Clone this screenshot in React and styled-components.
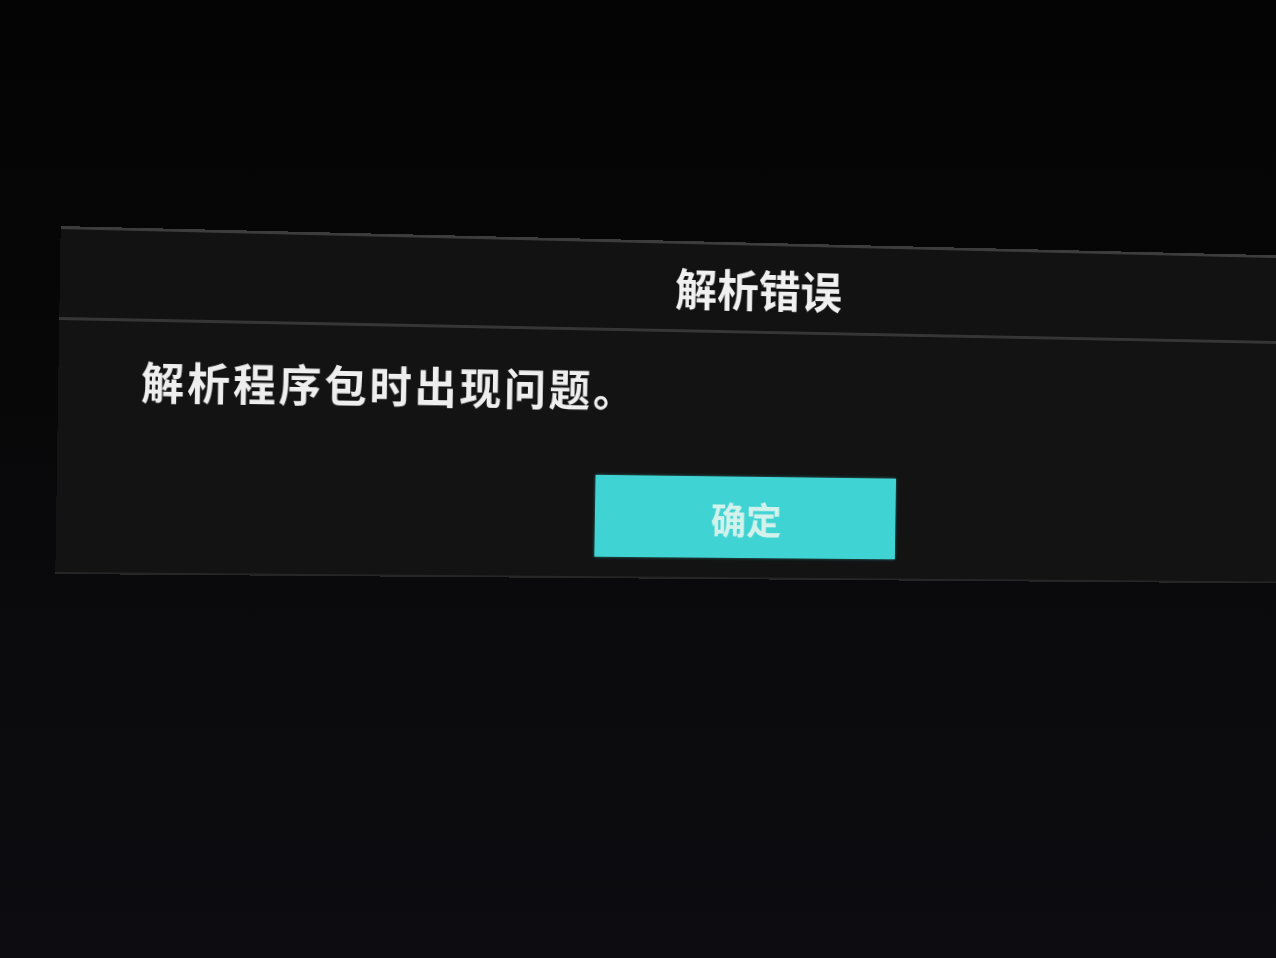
import * as React from "react"
import styled, { createGlobalStyle } from "styled-components"

const GlobalStyle = createGlobalStyle`
  html, body {
    margin: 0;
    padding: 0;
    background: #040404;
    overflow: hidden;
  }
  body {
    font-family: "Noto Sans CJK SC", "Noto Sans", sans-serif;
  }
`

// **** Styled Components ****
const Screen = styled.div`
  width: 1276px;
  height: 958px;
  overflow: hidden;
  background: linear-gradient(
    180deg,
    #040404 0%,
    #060606 30%,
    #0b0b0e 70%,
    #0d0d11 100%
  );
  padding-top: 226px;
  box-sizing: border-box;
`

// the photo is taken at a slight angle, so the panel gets a little perspective
const Dialog = styled.div`
  width: 1460px;
  margin-left: 58px;
  background: #111111;
  transform: perspective(3000px) rotateY(8deg) rotate(0.9deg);
  transform-origin: 0 50%;
  border-bottom: 2px solid #262626;
`

const Header = styled.div`
  height: 88px;
  display: flex;
  align-items: center;
  justify-content: center;
  border-top: 3px solid #3c3c3c;
  border-bottom: 3px solid #363636;
  background: #121212;
`

const Title = styled.h1`
  margin: 0;
  font-size: 45px;
  font-weight: 700;
  color: #f0f0f0;
  letter-spacing: 0;
`

const Body = styled.div`
  padding: 30px 0 20px 84px;
  background: #131313;
`

const Message = styled.p`
  margin: 0;
  font-size: 44px;
  font-weight: 700;
  color: #eeeeee;
  line-height: 58px;
  letter-spacing: 3px;
`

const Actions = styled.div`
  display: flex;
  padding-top: 60px;
  padding-left: 474px;
`

const OkButton = styled.button`
  width: 324px;
  height: 84px;
  border: none;
  background: #3fd3d3;
  color: #d4f2ec;
  font-family: "Noto Sans CJK SC", sans-serif;
  font-size: 38px;
  font-weight: 700;
  cursor: pointer;
  box-shadow: 0 0 3px rgba(60, 210, 210, 0.5);
`

const App = () => {
  return (
    <>
      <GlobalStyle />
      <Screen>
        <Dialog>
          <Header>
            <Title>解析错误</Title>
          </Header>
          <Body>
            <Message>解析程序包时出现问题。</Message>
            <Actions>
              <OkButton>确定</OkButton>
            </Actions>
          </Body>
        </Dialog>
      </Screen>
    </>
  )
}

export default App
